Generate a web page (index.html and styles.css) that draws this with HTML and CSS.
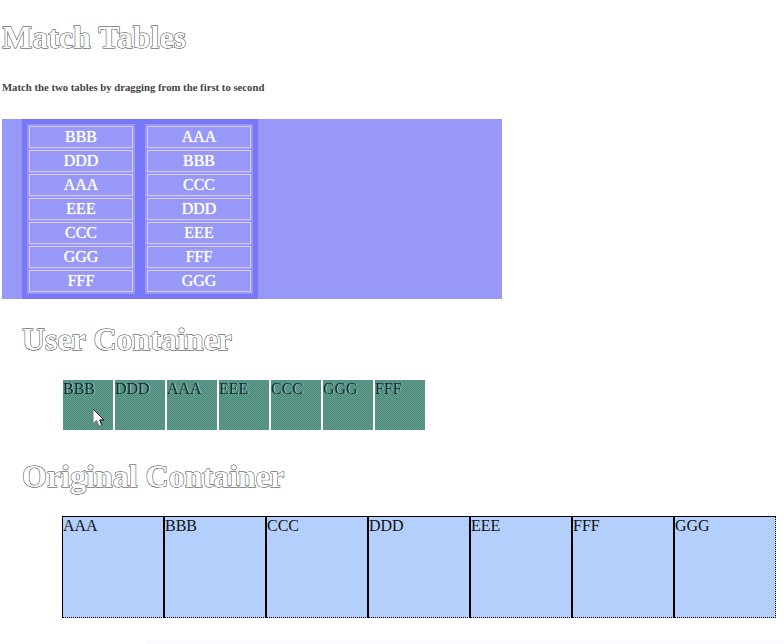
FILE: index.html
```html
<!DOCTYPE html>
<html lang="en">
<head>
<meta charset="utf-8">
<title>Match Tables</title>
<link rel="stylesheet" href="styles.css">
</head>
<body>
<header class="intro">
  <h1 class="heading">Match Tables</h1>
  <h6 class="hint">Match the two tables by dragging from the first to second</h6>
</header>
<main>
  <section class="match">
    <div class="pair">
      <table class="list">
        <tbody>
          <tr><td>BBB</td></tr>
          <tr><td>DDD</td></tr>
          <tr><td>AAA</td></tr>
          <tr><td>EEE</td></tr>
          <tr><td>CCC</td></tr>
          <tr><td>GGG</td></tr>
          <tr><td>FFF</td></tr>
        </tbody>
      </table>
      <table class="list">
        <tbody>
          <tr><td>AAA</td></tr>
          <tr><td>BBB</td></tr>
          <tr><td>CCC</td></tr>
          <tr><td>DDD</td></tr>
          <tr><td>EEE</td></tr>
          <tr><td>FFF</td></tr>
          <tr><td>GGG</td></tr>
        </tbody>
      </table>
    </div>
  </section>
  <section class="container">
    <h1 class="heading">User Container</h1>
    <ul class="tiles user">
      <li>BBB
        <svg class="pointer" width="13" height="20" viewBox="0 0 13 20" aria-hidden="true">
          <path d="M1 1V15.500L4.500 12.500L7 18L9.500 17L7.500 12H12Z" fill="#fff" stroke="#777" stroke-width="1"/>
          <path d="M1 1L12 12H8L10 17" fill="none" stroke="#222" stroke-width="1"/>
        </svg>
      </li>
      <li>DDD</li>
      <li>AAA</li>
      <li>EEE</li>
      <li>CCC</li>
      <li>GGG</li>
      <li>FFF</li>
    </ul>
  </section>
  <section class="container">
    <h1 class="heading">Original Container</h1>
    <ul class="tiles original">
      <li>AAA</li>
      <li>BBB</li>
      <li>CCC</li>
      <li>DDD</li>
      <li>EEE</li>
      <li>FFF</li>
      <li>GGG</li>
    </ul>
  </section>
</main>
<footer class="strip"></footer>
</body>
</html>
```
FILE: styles.css
```css
* {
  box-sizing: border-box;
}

body {
  margin: 0;
  padding: 0 2px;
  background: #fff;
  color: #111;
  font-family: "Liberation Serif", serif;
  font-size: 16px;
  line-height: 18px;
}

.heading {
  margin: 0;
  color: #fff;
  font-size: 32px;
  line-height: 36px;
  font-weight: bold;
  -webkit-text-stroke: 1px #333;
  paint-order: stroke fill;
}

.intro {
  padding-top: 19px;
}

.hint {
  margin: 23px 0;
  color: #444;
}

.match {
  max-width: 500px;
  padding-left: 20px;
  background: #9898f9;
}

.pair {
  display: flex;
  gap: 10px;
  width: fit-content;
  padding: 5px;
  background: #7777f7;
}

.list {
  width: 108px;
  border-spacing: 2px;
  background: #9898f9;
  color: #fff;
  text-align: center;
  text-shadow: 0 0 1px #fff;
}

.list td {
  padding: 1px;
  border: 1px solid #dccdf0;
}

.container {
  padding: 22px 0 0 20px;
}

.container + .container {
  padding-top: 28px;
}

.tiles {
  display: flex;
  margin: 22px 0 0;
  padding: 0 0 0 40px;
  list-style: none;
}

.user {
  gap: 2px;
  margin-top: 23px;
  padding-left: 41px;
}

.user li {
  position: relative;
  width: 50px;
  height: 50px;
  background: repeating-conic-gradient(#4b8b80 0 25%, #639b88 0 50%) 0 0 / 2px 2px;
  color: #082c30;
  text-shadow: 1px 0 0 #a4c8c0;
}

.pointer {
  position: absolute;
  left: 29px;
  top: 28px;
}

.original li {
  width: 102px;
  height: 102px;
  border: 1px solid #000;
  border-bottom-style: dotted;
  background: #b4cffb;
}

.original li:last-child {
  border-right-style: dotted;
}

.strip {
  height: 4px;
  margin: 22px -2px 0 145px;
  background: #fafaff;
}
```
